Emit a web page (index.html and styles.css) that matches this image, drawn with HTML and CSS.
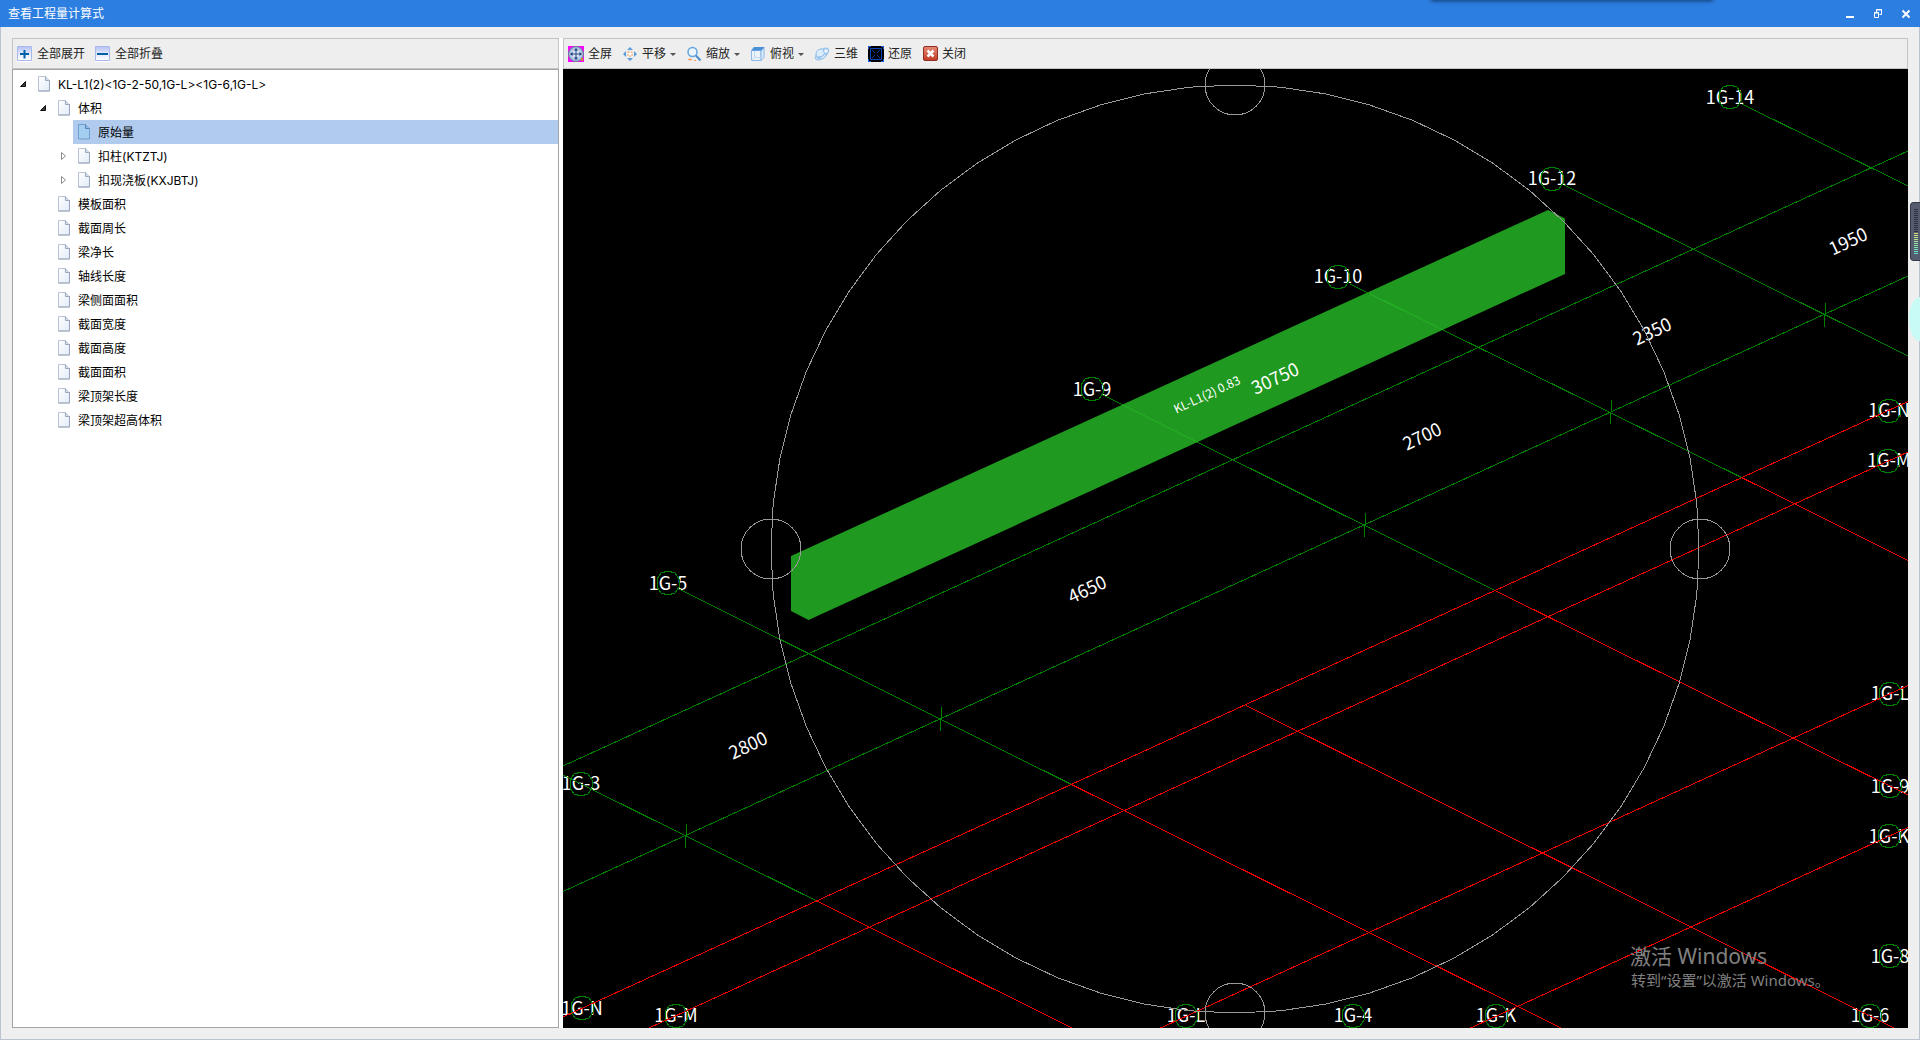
FILE: index.html
```html
<!DOCTYPE html>
<html lang="zh-CN">
<head>
<meta charset="utf-8">
<title>查看工程量计算式</title>
<link rel="stylesheet" href="styles.css">
</head>
<body>
<svg class="defs" aria-hidden="true">
  <defs>
    <linearGradient id="page-fill" x1="0" y1="0" x2="1" y2="1">
      <stop offset="0" stop-color="#ffffff"/><stop offset="1" stop-color="#e3ebf8"/>
    </linearGradient>
    <linearGradient id="box-fill" x1="0" y1="0" x2="0" y2="1">
      <stop offset="0" stop-color="#b4c0f4"/><stop offset="0.45" stop-color="#dfe5fc"/><stop offset="1" stop-color="#ffffff"/>
    </linearGradient>
    <linearGradient id="close-fill" x1="0" y1="0" x2="0" y2="1">
      <stop offset="0" stop-color="#e58a78"/><stop offset="1" stop-color="#c33a24"/>
    </linearGradient>
    <radialGradient id="ball-fill">
      <stop offset="0" stop-color="#ffffff"/><stop offset="0.6" stop-color="#c4d4ee"/><stop offset="1" stop-color="#8ba6d2"/>
    </radialGradient>
    <symbol id="page" viewBox="0 0 12 16">
      <path d="M.5 .5h7l4 4v10.500h-11z" fill="url(#page-fill)" stroke="#b9c2d3"/>
      <path d="M11.500 4.500v10.500h-11" fill="none" stroke="#97a4b9"/>
      <path d="M7.500 .5v4h4" fill="#d5deec" stroke="#9aa8bd"/>
    </symbol>
    <symbol id="page-on" viewBox="0 0 12 16">
      <path d="M.5 .5h7l4 4v10.500h-11z" fill="#a5cdf0" stroke="#6f9fcd"/>
      <path d="M7.500 .5v4h4" fill="#8ebbe5" stroke="#5485b8"/>
    </symbol>
    <polygon id="bubble" points="0,-12 7,-10 11,-4 11,4 7,10 0,12 -7,10 -11,4 -11,-4 -7,-10"/>
    <line id="tick" x1="0.500" y1="-12" x2="-0.500" y2="12"/>
    <polyline id="arc" points="0,-464 45.500,-461.800 90.500,-455.100 134.700,-444 177.600,-428.700 218.700,-409.200 257.800,-385.800 294.400,-358.700 328.100,-328.100 358.700,-294.400 385.800,-257.800 409.200,-218.700 428.700,-177.600 444,-134.700 455.100,-90.500 461.800,-45.500 464,0"/>
  </defs>
</svg>

<div class="window">
  <header class="titlebar">
    <h1 class="title">查看工程量计算式</h1>
    <div class="window-buttons">
      <button type="button" aria-label="最小化"><svg width="10" height="10"><path d="M1 7h8v2h-8z" fill="#fff"/></svg></button>
      <button type="button" aria-label="还原窗口"><svg width="10" height="10" fill="none" stroke="#fff"><path d="M3.500 3V.5h5v5H6.500M3 1h6M1 4h5" /><path d="M1.500 3.500h4v5h-4z"/></svg></button>
      <button type="button" aria-label="关闭窗口"><svg width="10" height="10"><path d="M1.500 1.500l7 7M8.500 1.500l-7 7" stroke="#fff" stroke-width="2"/></svg></button>
    </div>
  </header>

  <main class="workspace">
    <section class="side">
      <div class="toolbar">
        <button type="button" class="tool"><svg width="16" height="16"><path d="M.5 .5h14v14h-14z" fill="url(#box-fill)" stroke="#a9b9ee"/><path d="M0 15.500h15" stroke="#fff"/><path d="M3 8h9M7.500 4v8.500" stroke="#0060a8" stroke-width="2"/></svg>全部展开</button>
        <button type="button" class="tool"><svg width="16" height="16"><path d="M.5 .5h14v14h-14z" fill="url(#box-fill)" stroke="#a9b9ee"/><path d="M0 15.500h15" stroke="#fff"/><path d="M2 8h11" stroke="#0060a8" stroke-width="2"/></svg>全部折叠</button>
      </div>
      <div class="tree-panel">
        <ul class="tree" role="tree">
          <li role="treeitem" aria-expanded="true">
            <div class="node"><svg class="twist" width="10" height="10"><path d="M7.500 2.500v5h-5z" fill="#3c3c3c" stroke="#111"/></svg><svg width="12" height="16"><use href="#page"/></svg><span>KL-L1(2)&lt;1G-2-50,1G-L&gt;&lt;1G-6,1G-L&gt;</span></div>
            <ul role="group">
              <li role="treeitem" aria-expanded="true">
                <div class="node"><svg class="twist" width="10" height="10"><path d="M7.500 2.500v5h-5z" fill="#3c3c3c" stroke="#111"/></svg><svg width="12" height="16"><use href="#page"/></svg><span>体积</span></div>
                <ul role="group">
                  <li role="treeitem" aria-selected="true"><div class="node leaf selected"><svg width="12" height="16"><use href="#page-on"/></svg><span>原始量</span></div></li>
                  <li role="treeitem" aria-expanded="false"><div class="node"><svg class="twist" width="10" height="10"><path d="M3.500 1.500v7l4-3.500z" fill="#fff" stroke="#8a8a8a"/></svg><svg width="12" height="16"><use href="#page"/></svg><span>扣柱(KTZTJ)</span></div></li>
                  <li role="treeitem" aria-expanded="false"><div class="node"><svg class="twist" width="10" height="10"><path d="M3.500 1.500v7l4-3.500z" fill="#fff" stroke="#8a8a8a"/></svg><svg width="12" height="16"><use href="#page"/></svg><span>扣现浇板(KXJBTJ)</span></div></li>
                </ul>
              </li>
              <li role="treeitem"><div class="node leaf"><svg width="12" height="16"><use href="#page"/></svg><span>模板面积</span></div></li>
              <li role="treeitem"><div class="node leaf"><svg width="12" height="16"><use href="#page"/></svg><span>截面周长</span></div></li>
              <li role="treeitem"><div class="node leaf"><svg width="12" height="16"><use href="#page"/></svg><span>梁净长</span></div></li>
              <li role="treeitem"><div class="node leaf"><svg width="12" height="16"><use href="#page"/></svg><span>轴线长度</span></div></li>
              <li role="treeitem"><div class="node leaf"><svg width="12" height="16"><use href="#page"/></svg><span>梁侧面面积</span></div></li>
              <li role="treeitem"><div class="node leaf"><svg width="12" height="16"><use href="#page"/></svg><span>截面宽度</span></div></li>
              <li role="treeitem"><div class="node leaf"><svg width="12" height="16"><use href="#page"/></svg><span>截面高度</span></div></li>
              <li role="treeitem"><div class="node leaf"><svg width="12" height="16"><use href="#page"/></svg><span>截面面积</span></div></li>
              <li role="treeitem"><div class="node leaf"><svg width="12" height="16"><use href="#page"/></svg><span>梁顶架长度</span></div></li>
              <li role="treeitem"><div class="node leaf"><svg width="12" height="16"><use href="#page"/></svg><span>梁顶架超高体积</span></div></li>
            </ul>
          </li>
        </ul>
      </div>
    </section>

    <section class="viewer">
      <div class="toolbar">
        <button type="button" class="tool"><svg width="16" height="16"><path d="M0 0h16v16H0z" fill="#f0f"/><circle cx="8" cy="8" r="7.500" fill="url(#ball-fill)" stroke="#6f7f9c"/><path d="M8 4v8M4 8h8" stroke="#1c3f7c"/><path d="M8 2l2 2.500H6zM8 14l2-2.500H6zM2 8l2.500-2v4zM14 8l-2.500-2v4z" fill="#1c3f7c"/><path d="M13 12h2v3h-2z" fill="#d08a2e"/></svg>全屏</button>
        <button type="button" class="tool"><svg width="16" height="16"><path d="M8 1l3 3H5zM8 15l3-3H5zM1 8l3-3v6zM15 8l-3-3v6z" fill="#5a9bdc"/><path d="M6 6h4v4H6z" fill="#fff" stroke="#f0a060" stroke-dasharray="2 1"/></svg>平移<i class="caret"></i></button>
        <button type="button" class="tool"><svg width="16" height="16"><circle cx="6.500" cy="6" r="4.500" fill="#eef6fd" stroke="#62a3df" stroke-width="1.500"/><path d="M10 9.500l4.500 5" stroke="#4e8fd0" stroke-width="2"/><path d="M2 13.500h4M4 12v3M8 14.500h2" stroke="#f2a066"/></svg>缩放<i class="caret"></i></button>
        <button type="button" class="tool"><svg width="16" height="16"><path d="M1.500 4.500h9.500v10H1.500z" fill="#eaf3fc" stroke="#8ab8e4"/><path d="M11 4.500l3-3v10l-3 3z" fill="#dcebf9" stroke="#8ab8e4"/><path d="M1 4.500l3-3.500h10.500l-3 3.500z" fill="#4a90d9"/><path d="M4.500 5v6.500H11M4.500 11.500l-3 3" fill="none" stroke="#c2daf0"/></svg>俯视<i class="caret"></i></button>
        <button type="button" class="tool"><svg width="16" height="16"><ellipse cx="8" cy="8" rx="8" ry="4" transform="rotate(-40 8 8)" fill="#cfe4f7" stroke="#9cc5ec"/><circle cx="7" cy="8" r="5" fill="#dcecfa" stroke="#8fbde9"/><path d="M3 11c4 1 8-2 9.500-6.500" fill="none" stroke="#6ea8e0"/><circle cx="12" cy="5" r="2.500" fill="#e8f3fc" stroke="#8fbde9"/></svg>三维</button>
        <button type="button" class="tool"><svg width="16" height="16"><path d="M0 0h16v16H0z" fill="#000"/><path d="M0 3V0h3M13 0h3v3M16 13v3h-3M3 16H0v-3" fill="none" stroke="#1560e0" stroke-width="2"/><path d="M2.500 2.500h11v11h-11z" fill="none" stroke="#0b46b8"/><path d="M4 4l3 3M12 4l-3 3M4 12l3-3M12 12l-3-3" fill="none" stroke="#0a3c9c"/></svg>还原</button>
        <button type="button" class="tool"><svg width="16" height="16"><rect x="1.500" y=".5" width="14" height="14" rx="1.500" fill="url(#close-fill)" stroke="#8e2f22"/><path d="M5.500 4.500l6 6M11.500 4.500l-6 6" stroke="#fff" stroke-width="2.500"/></svg>关闭</button>
      </div>
      <svg class="scene" viewBox="563 69 1345 959" preserveAspectRatio="xMidYMid slice">
        <polygon class="beam" points="791,556 1548,210 1565,218.500 1565,274 808.500,620 791,611"/>
        <g class="labels">
          <text x="1730" y="104">1G-14</text><text x="1552" y="185">1G-12</text><text x="1338" y="283">1G-10</text>
          <text x="1092" y="396">1G-9</text><text x="668" y="590">1G-5</text><text x="581" y="790">1G-3</text>
          <text x="582" y="1015">1G-N</text><text x="676" y="1022">1G-M</text><text x="1186" y="1022">1G-L</text>
          <text x="1353" y="1022">1G-4</text><text x="1496" y="1022">1G-K</text><text x="1870" y="1022">1G-6</text>
          <text x="1889" y="417">1G-N</text><text x="1889" y="467">1G-M</text><text x="1890" y="700">1G-L</text>
          <text x="1890" y="793">1G-9</text><text x="1889" y="843">1G-K</text><text x="1890" y="963">1G-8</text>
        </g>
        <g class="labels">
          <text transform="translate(1848 241) rotate(-25)" y="7">1950</text>
          <text transform="translate(1652 331) rotate(-25)" y="7">2350</text>
          <text transform="translate(1422 436) rotate(-25)" y="7">2700</text>
          <text transform="translate(1275 378) rotate(-25)" y="7">30750</text>
          <text transform="translate(1087 589) rotate(-25)" y="7">4650</text>
          <text transform="translate(748 745) rotate(-25)" y="7">2800</text>
          <text class="small" transform="translate(1207 395) rotate(-25)" y="4">KL-L1(2) 0.83</text>
        </g>
        <g class="green">
          <path d="M563 766L1908 151M563 891.500L1908 276"/>
          <path d="M1742 104L1908 186M1564 185L1908 356M1350 284L1742 477.700M1103 395L1495 590.500M679 589L1071.500 784.500M563 775L816.700 901"/>
          <use href="#tick" x="686" y="836"/><use href="#tick" x="941" y="719"/><use href="#tick" x="1365" y="525"/><use href="#tick" x="1611" y="412"/><use href="#tick" x="1825" y="315"/>
          <use href="#bubble" x="1730" y="97"/><use href="#bubble" x="1552" y="179"/><use href="#bubble" x="1338" y="277"/>
          <use href="#bubble" x="1092" y="389"/><use href="#bubble" x="668" y="583"/><use href="#bubble" x="581" y="784"/>
          <use href="#bubble" x="582" y="1008"/><use href="#bubble" x="676" y="1016"/><use href="#bubble" x="1186" y="1016"/>
          <use href="#bubble" x="1353" y="1016"/><use href="#bubble" x="1496" y="1016"/><use href="#bubble" x="1870" y="1016"/>
          <use href="#bubble" x="1889" y="411"/><use href="#bubble" x="1888" y="461"/><use href="#bubble" x="1890" y="694"/>
          <use href="#bubble" x="1890" y="786"/><use href="#bubble" x="1889" y="836"/><use href="#bubble" x="1890" y="956"/>
        </g>
        <path class="lit" d="M1369 293.400L1443.500 330.200M1123 405L1197 441.900"/>
        <g class="red">
          <path d="M563 1017L1908 401.500M649 1028L1908 452M1160.500 1028L1908 685.500M1470.500 1028L1908 827.500"/>
          <path d="M1742 477.700L1908 560.600M1495 590.500L1908 795M1071.500 784.500L1561 1028M1245.700 705.300L1894 1028M816.700 901L1072 1028"/>
        </g>
        <g class="orbit" transform="translate(1235 549)">
          <use href="#arc"/><use href="#arc" transform="scale(-1 1)"/><use href="#arc" transform="scale(1 -1)"/><use href="#arc" transform="scale(-1 -1)"/>
          <circle cy="-464" r="30"/><circle cy="464" r="30"/><circle cx="-464" r="30"/><circle cx="465" r="30"/>
        </g>
        <g class="notice">
          <text class="notice-title" x="1630" y="964">激活 Windows</text>
          <text class="notice-text" x="1631" y="986">转到“设置”以激活 Windows。</text>
        </g>
      </svg>
    </section>
  </main>
</div>

<div class="top-shadow"></div>
<div class="meter"></div>
<div class="bubble-tab"></div>
</body>
</html>
```
FILE: styles.css
```css
* {
  box-sizing: border-box;
}

body {
  margin: 0;
  overflow: hidden;
  font: 12px/16px "Noto Sans", "Noto Sans CJK SC", sans-serif;
  color: #000;
}

.defs {
  position: absolute;
  width: 0;
  height: 0;
}

button {
  padding: 0;
  border: 0;
  background: none;
  font: inherit;
  color: inherit;
}

.window {
  display: flex;
  flex-direction: column;
  height: 100vh;
  background: #efefef;
}

.titlebar {
  display: flex;
  align-items: center;
  justify-content: space-between;
  height: 27px;
  padding: 0 9px 0 8px;
  background: #2c7ee1;
  color: #fff;
}

.title {
  margin: 0;
  font-size: 12px;
  font-weight: 400;
}

.window-buttons {
  display: flex;
  gap: 18px;
}

.window-buttons svg,
.tool svg,
.node svg {
  display: block;
  flex: none;
}

.workspace {
  display: flex;
  flex: 1;
  gap: 4px;
  min-height: 0;
  padding: 11px;
  border: 1px solid #bcc3d0;
  border-top: 0;
}

.side {
  display: flex;
  flex: none;
  flex-direction: column;
  width: 547px;
  box-shadow: 4px 0 #fff;
}

.viewer {
  display: flex;
  flex: 1;
  flex-direction: column;
  min-width: 0;
}

.toolbar {
  display: flex;
  flex: none;
  align-items: center;
  gap: 10px;
  height: 31px;
  padding: 1px 4px 0;
  border: 1px solid #c2c4ca;
  background: #eee;
  color: #222;
}

.tool {
  display: flex;
  align-items: center;
  gap: 4px;
}

.caret {
  width: 6px;
  border: solid transparent;
  border-width: 3px 3px 0;
  border-top-color: #555;
}

.tree-panel {
  flex: 1;
  min-height: 0;
  padding-top: 2px;
  border: 1px solid #a4a4a4;
  background: #fff;
}

.tree,
.tree ul {
  margin: 0;
  padding: 0;
  list-style: none;
}

.tree {
  padding-left: 5px;
  font-family: Inter, "Noto Sans CJK SC", sans-serif;
}

.tree ul {
  padding-left: 20px;
}

.node {
  display: flex;
  align-items: center;
  gap: 8px;
  height: 24px;
}

.node span {
  padding-top: 2px;
}

.node .twist {
  margin-right: 2px;
}

.leaf {
  margin-left: 15px;
  padding-left: 5px;
}

.selected {
  background: #b0cbed;
}

.scene {
  display: block;
  flex: 1;
  width: 100%;
  min-height: 0;
  background: #000;
}

.beam {
  fill: #1f991f;
}

.labels {
  fill: #fff;
  font: 18px "Noto Sans CJK SC", sans-serif;
  text-anchor: middle;
}

.labels .small {
  font-size: 12px;
}

.green,
.lit,
.red,
.orbit {
  fill: none;
  stroke-width: 1px;
  shape-rendering: crispEdges;
}

.green {
  stroke: #008000;
}

.lit {
  stroke: #22b422;
}

.red {
  stroke: #f00000;
}

.orbit {
  stroke: #999;
}

.notice {
  fill: #808080;
  font-family: "Noto Sans", "Noto Sans CJK SC", sans-serif;
}

.notice-title {
  font-size: 21px;
}

.notice-text {
  font-size: 15px;
}

.top-shadow {
  position: absolute;
  top: -4px;
  left: 1432px;
  width: 280px;
  height: 4px;
  box-shadow: 0 0 4px 1px #123a6e;
}

.meter {
  position: absolute;
  top: 202px;
  right: 0;
  width: 10px;
  height: 59px;
  border: 1px solid #33384a;
  border-right: 0;
  border-radius: 4px 0 0 4px;
  background: #555c70;
}

.meter::after {
  content: "";
  position: absolute;
  top: 6px;
  right: 2px;
  width: 4px;
  height: 45px;
  background:
    repeating-linear-gradient(transparent 0 1px, #555c70 1px 2px),
    linear-gradient(#2c3140 0 24px, #d8e070 24px, #60e0d0);
}

.bubble-tab {
  position: absolute;
  top: 297px;
  right: 0;
  width: 11px;
  height: 44px;
  border-radius: 11px 0 0 11px / 22px 0 0 22px;
  background: #c8fbf6;
}
```
